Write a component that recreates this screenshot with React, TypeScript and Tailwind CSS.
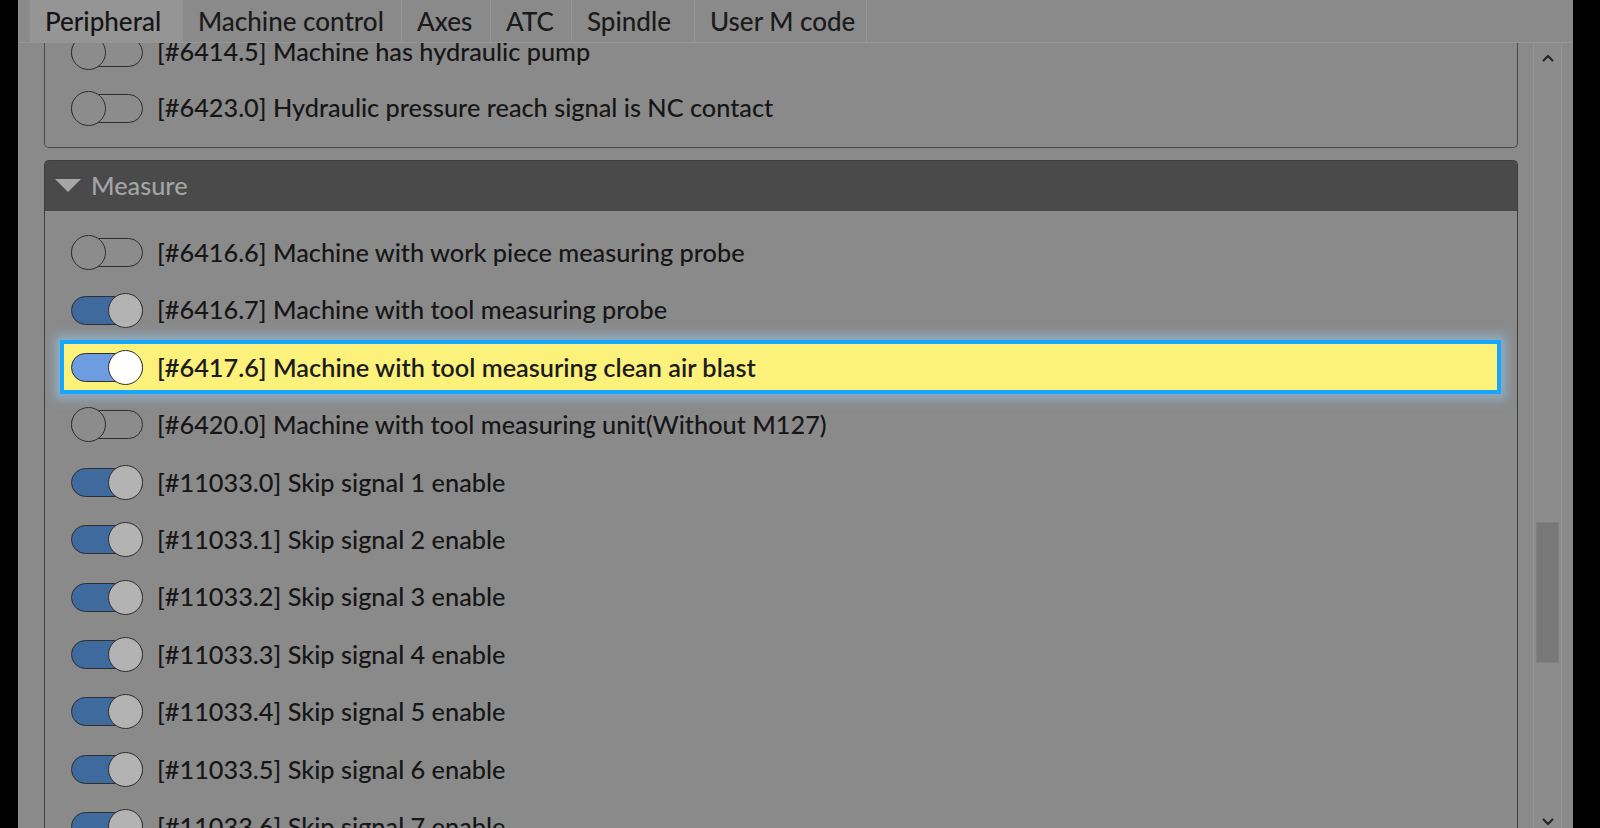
import React from "react";

const FONT = { fontFamily: "Lato, 'Noto Sans', sans-serif" };

function Toggle({ on, bright }: { on: boolean; bright?: boolean }) {
  const track = on ? (bright ? "bg-[#6d9de0]" : "bg-[#3e6a9e]") : "bg-[#8c8c8c]";
  const knob = bright ? "bg-white" : on ? "bg-[#b3b3b3]" : "bg-[#8c8c8c]";
  return (
    <div className="relative w-[72px] h-[35px] shrink-0">
      <div className={`absolute left-0 right-0 top-[3px] bottom-[3px] rounded-full border-[1.5px] border-[#2e2e2e] ${track}`} />
      <div
        className={`absolute top-0 w-[35px] h-[35px] rounded-full border-[1.5px] border-[#2e2e2e] ${knob} ${on ? "right-0" : "left-0"}`}
      />
    </div>
  );
}

function Row({ on, label, hl, h = "h-[57.4px]" }: { on: boolean; label: string; hl?: boolean; h?: string }) {
  const content = (
    <>
      <Toggle on={on} bright={hl} />
      <span
        className={`text-[25.3px] leading-none whitespace-nowrap ${hl ? "text-[#1c1c1c] font-semibold" : "text-[#161616] font-medium"}`}
        style={FONT}
      >
        {label}
      </span>
    </>
  );
  if (hl) {
    return (
      <div className={`${h} flex items-center ml-[15px] mr-[16px] relative z-10`}>
        <div className="h-[54px] w-full border-4 border-[#16a6ff] bg-[#fcf27b] shadow-[0_0_10px_5px_rgba(150,205,245,0.55)] pl-[7px] flex items-center gap-[14px]">
          {content}
        </div>
      </div>
    );
  }
  return <div className={`${h} ml-[19px] mr-[20px] pl-[7px] flex items-center gap-[14px]`}>{content}</div>;
}

const tabs: [string, string][] = [
  ["Peripheral", "w-[153px]"],
  ["Machine control", "w-[219px]"],
  ["Axes", "w-[89px]"],
  ["ATC", "w-[81px]"],
  ["Spindle", "w-[123px]"],
  ["User M code", "w-[172px]"],
];

const measureRows: [boolean, string, boolean?][] = [
  [false, "[#6416.6] Machine with work piece measuring probe"],
  [true, "[#6416.7] Machine with tool measuring probe"],
  [true, "[#6417.6] Machine with tool measuring clean air blast", true],
  [false, "[#6420.0] Machine with tool measuring unit(Without M127)"],
  [true, "[#11033.0] Skip signal 1 enable"],
  [true, "[#11033.1] Skip signal 2 enable"],
  [true, "[#11033.2] Skip signal 3 enable"],
  [true, "[#11033.3] Skip signal 4 enable"],
  [true, "[#11033.4] Skip signal 5 enable"],
  [true, "[#11033.5] Skip signal 6 enable"],
  [true, "[#11033.6] Skip signal 7 enable"],
];

export default function App() {
  return (
    <div className="w-[1600px] h-[828px] bg-black flex overflow-hidden" style={FONT}>
      <div className="w-[18px] shrink-0" />
      <div className="w-[1555px] shrink-0 flex flex-col bg-[#8a8a8a]">
        {/* tab bar */}
        <div className="h-[43px] shrink-0 flex pl-[12px] border-b border-[#969696] relative z-20 bg-[#8a8a8a]">
          {tabs.map(([t, w], i) => (
            <div
              key={t}
              className={`h-full ${w} pl-[15px] flex items-center whitespace-nowrap text-[26px] font-medium leading-none ${
                i === 0 ? "bg-[#959595] text-[#141414]" : "border-r border-[#969696] text-[#1a1a1a]"
              }`}
            >
              {t}
            </div>
          ))}
        </div>
        {/* body */}
        <div className="flex-1 flex overflow-hidden">
          <div className="w-[1500px] pl-[26px] overflow-hidden">
            <div className="-mt-[19px]">
              {/* upper group */}
              <div className="border-x-[1.5px] border-b-[1.5px] border-[#4a4a4a] rounded-b-[5px] pb-[11px]">
                <Row on={false} label="[#6414.5] Machine has hydraulic pump" h="h-[56px]" />
                <Row on={false} label="[#6423.0] Hydraulic pressure reach signal is NC contact" h="h-[56px]" />
              </div>
              {/* measure group */}
              <div className="mt-[12px] border-x-[1.5px] border-t-[1.5px] border-[#3e3e3e] rounded-t-[5px]">
                <div className="h-[50px] bg-[#4a4a4a] flex items-center pl-[10px] gap-[10px]">
                  <svg width="26" height="14" viewBox="0 0 26 14">
                    <polygon points="0,0 26,0 13,13" fill="#a6a6a6" />
                  </svg>
                  <span className="text-[25.3px] font-medium leading-none text-[#a4a4a4]">Measure</span>
                </div>
                <div className="pt-[13px]">
                  {measureRows.map(([on, label, hl]) => (
                    <Row key={label} on={on} label={label} hl={hl} />
                  ))}
                </div>
              </div>
            </div>
          </div>
          {/* scrollbar */}
          <div className="w-[55px] pl-[15px] pr-[11px] flex">
            <div className="w-[29px] border-x border-[#959595] bg-[#8c8c8c] flex flex-col items-center relative">
              <svg width="12" height="8" viewBox="0 0 12 8" className="mt-[11px]">
                <polyline points="1,7 6,2 11,7" fill="none" stroke="#222" strokeWidth="2" />
              </svg>
              <div className="mt-[460px] w-[23px] h-[141px] bg-[#787878] border border-[#808080]" />
              <svg width="12" height="8" viewBox="0 0 12 8" className="mt-auto mb-[2px]">
                <polyline points="1,1 6,6 11,1" fill="none" stroke="#222" strokeWidth="2" />
              </svg>
            </div>
          </div>
        </div>
      </div>
    </div>
  );
}
